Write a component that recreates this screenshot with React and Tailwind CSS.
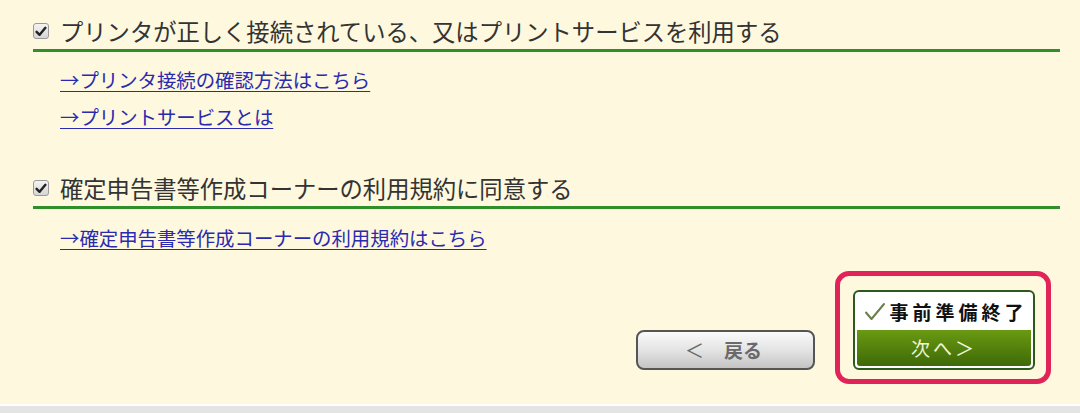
import React from 'react';

const font = { fontFamily: '"Noto Sans CJK JP", "Noto Sans", sans-serif' };

const CheckBox = () => (
  <span className="w-[16px] h-[16px] rounded-[3px] border border-[#9a9a9a] bg-gradient-to-b from-[#f4f4f4] to-[#d6d6d6] flex items-center justify-center shrink-0">
    <svg width="12" height="11" viewBox="0 0 12 11">
      <path d="M1.6 5.8 L4.6 8.8 L10.4 1.8" fill="none" stroke="#222" strokeWidth="2.4" strokeLinecap="round" strokeLinejoin="round" />
    </svg>
  </span>
);

const Heading = ({ children, className = '' }) => (
  <div className={`flex items-center h-[26px] ${className}`}>
    <CheckBox />
    <span className="ml-[11px] text-[23.3px] leading-[26px] text-[#333]">{children}</span>
  </div>
);

const Rule = () => <div className="mt-[5px] h-[3px] bg-[#2f8f2a]" />;

const LinkRow = ({ children, className = '' }) => (
  <div className={`pl-[27px] h-[24px] leading-[24px] ${className}`}>
    <a href="#" className="text-[19.4px] text-[#2a2ab0] underline underline-offset-[3px]">{children}</a>
  </div>
);

export default function App() {
  return (
    <div className="w-[1080px] h-[413px] bg-[#fdf8de] flex flex-col overflow-hidden" style={font}>
      <div className="flex-1 pl-[33px] pr-[20px] pt-[18px]">
        <Heading>プリンタが正しく接続されている、又はプリントサービスを利用する</Heading>
        <Rule />
        <LinkRow className="mt-[16px]">→プリンタ接続の確認方法はこちら</LinkRow>
        <LinkRow className="mt-[13px]">→プリントサービスとは</LinkRow>

        <Heading className="mt-[46px]">確定申告書等作成コーナーの利用規約に同意する</Heading>
        <Rule />
        <LinkRow className="mt-[17px]">→確定申告書等作成コーナーの利用規約はこちら</LinkRow>

        <div className="mt-[21px] mr-[9px] flex justify-end items-end gap-[20px]">
          <button className="mb-[14px] w-[179px] h-[40px] rounded-[8px] border-2 border-[#555] bg-gradient-to-b from-[#fafafa] via-[#e4e4e4] to-[#c4c4c4] text-[#6a6a6a] text-[19px] font-bold flex items-center justify-center gap-[20px] pr-[4px]">
            <span className="font-normal">＜</span>
            <span>戻る</span>
          </button>
          <div className="w-[216px] h-[113px] border-[5px] border-[#e0245a] rounded-[14px] pl-[13px] pt-[14px]">
            <div className="w-[182px] h-[80px] border-2 border-[#2b5a1c] rounded-[6px] bg-white p-[2px] flex flex-col">
              <div className="h-[36px] flex items-center justify-center gap-[3px]">
                <svg width="22" height="20" viewBox="0 0 22 20">
                  <path d="M2 10.5 L7.5 17 L20 2" fill="none" stroke="#6b7f4a" strokeWidth="2" strokeLinecap="round" strokeLinejoin="round" />
                </svg>
                <span className="text-[19px] font-bold text-[#111] tracking-[4px] mr-[-4px]">事前準備終了</span>
              </div>
              <div className="flex-1 rounded-b-[3px] bg-gradient-to-b from-[#6a9a12] to-[#3e6a08] flex items-center justify-center text-[19px] text-[#eef6d8] tracking-[3px]">
                次へ＞
              </div>
            </div>
          </div>
        </div>
      </div>
      <div className="h-[9px] border-t-2 border-white bg-[#e4e4e4]" />
    </div>
  );
}
